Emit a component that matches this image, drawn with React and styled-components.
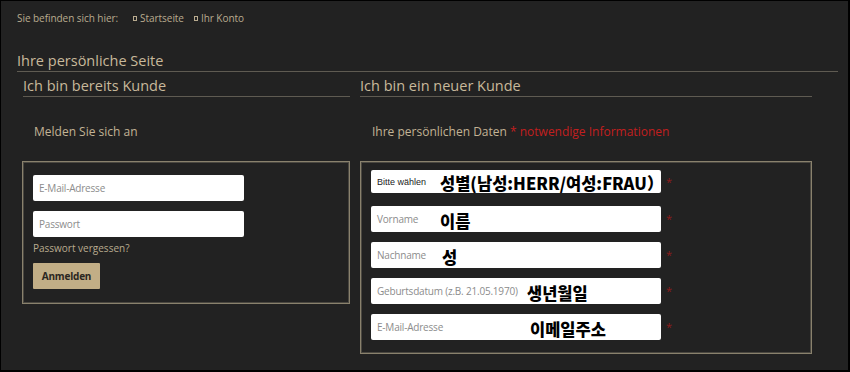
import React from "react";
import styled, { createGlobalStyle } from "styled-components";

const Global = createGlobalStyle`
  html, body { margin: 0; padding: 0; background: #222222; }
  * { box-sizing: border-box; }
`;

const Frame = styled.div`
  width: 850px;
  height: 372px;
  background: #222222;
  border-style: solid;
  border-color: #000;
  border-width: 1px 2px 2px 1px;
  font-family: "Open Sans", "Liberation Sans", sans-serif;
  color: #c2b395;
  overflow: hidden;
`;

const Breadcrumb = styled.div`
  display: flex;
  align-items: center;
  padding: 9px 0 0 16px;
  font-size: 10px;
  letter-spacing: -0.05px;
  line-height: 16px;
  color: #b9ab8f;
`;

const Crumb = styled.span`
  display: inline-flex;
  align-items: center;
  margin-left: ${(p) => p.$gap}px;
`;

const Bullet = styled.span`
  display: inline-block;
  width: 4px;
  height: 5px;
  border: 1px solid #b9ab8f;
  margin-right: 3px;
`;

const Main = styled.div`
  padding: 0 10px 0 16px;
`;

const PageTitle = styled.h1`
  margin: 25px 0 0 0;
  font-size: 14.5px;
  font-weight: 400;
  line-height: 20px;
  color: #c8b99b;
  border-bottom: 1px solid #5f5b52;
`;

const Columns = styled.div`
  display: grid;
  grid-template-columns: 328px 452px;
  column-gap: 10px;
  margin-left: 5px;
`;

const Column = styled.div`
  display: flex;
  flex-direction: column;
`;

const SectionTitle = styled.h2`
  margin: 4px 0 0 ${(p) => p.$indent}px;
  font-size: 14.5px;
  font-weight: 400;
  line-height: 20px;
  color: #c8b99b;
  border-bottom: 1px solid #5f5b52;
`;

const Intro = styled.div`
  margin: 26px 0 0 0;
  padding-left: 12px;
  font-size: 12px;
  line-height: 18px;
  color: #c2b395;
`;

const Required = styled.span`
  color: #c21f1f;
`;

const Panel = styled.div`
  margin-top: 20px;
  border: 1px solid #8a826d;
  box-shadow: inset 0 0 0 1px #4b4841;
  padding: ${(p) => p.$pad};
  display: flex;
  flex-direction: column;
`;

const Field = styled.div`
  position: relative;
  width: ${(p) => p.$w}px;
  height: ${(p) => p.$h || 26}px;
  background: #ffffff;
  border-radius: 2px;
  display: flex;
  align-items: center;
  padding-left: 6px;
  font-size: 10px;
  letter-spacing: -0.2px;
  color: #8c8c8c;
  margin-top: ${(p) => p.$mt || 0}px;
`;

const SelectText = styled.span`
  font-family: "Liberation Sans", Arial, sans-serif;
  font-size: 9px;
  letter-spacing: 0;
  color: #222;
`;

const Note = styled.span`
  position: absolute;
  left: ${(p) => p.$left}px;
  top: 0;
  bottom: 0;
  display: flex;
  align-items: center;
  padding-top: ${(p) => p.$pt || 3}px;
  font-family: "Noto Sans CJK KR", "Noto Sans", sans-serif;
  font-weight: 900;
  font-size: 16.5px;
  letter-spacing: 0;
  color: #000;
  white-space: nowrap;
`;

const Row = styled.div`
  display: flex;
  align-items: flex-start;
  margin-top: ${(p) => p.$mt || 0}px;
`;

const Star = styled.span`
  margin: ${(p) => p.$top}px 0 0 5px;
  font-size: 11px;
  line-height: 11px;
  color: #8e1b1b;
`;

const ForgotLink = styled.div`
  margin-top: 4px;
  font-size: 10px;
  line-height: 14px;
  color: #b9ab8f;
`;

const Button = styled.button`
  margin-top: 8px;
  width: 67px;
  height: 26px;
  border: none;
  border-radius: 1px;
  background: #c2ae86;
  color: #2a2621;
  font-family: "Open Sans", "Liberation Sans", sans-serif;
  font-weight: 700;
  font-size: 10px;
  letter-spacing: -0.2px;
  padding: 0;
`;

const fields = [
  { ph: "Vorname", note: "이름", left: 69 },
  { ph: "Nachname", note: "성", left: 71 },
  { ph: "Geburtsdatum (z.B. 21.05.1970)", note: "생년월일", left: 156 },
  { ph: "E-Mail-Adresse", note: "이메일주소", left: 159 },
];

export default function App() {
  return (
    <>
      <Global />
      <Frame>
        <Breadcrumb>
          <span>Sie befinden sich hier:</span>
          <Crumb $gap={15}>
            <Bullet />
            Startseite
          </Crumb>
          <Crumb $gap={10}>
            <Bullet />
            Ihr Konto
          </Crumb>
        </Breadcrumb>
        <Main>
          <PageTitle>Ihre persönliche Seite</PageTitle>
          <Columns>
            <Column>
              <SectionTitle $indent={1}>Ich bin bereits Kunde</SectionTitle>
              <Intro>Melden Sie sich an</Intro>
              <Panel $pad="13px 9px 14px 10px">
                <Field $w={211}>E-Mail-Adresse</Field>
                <Field $w={211} $mt={10}>Passwort</Field>
                <ForgotLink>Passwort vergessen?</ForgotLink>
                <Button>Anmelden</Button>
              </Panel>
            </Column>
            <Column>
              <SectionTitle $indent={0}>Ich bin ein neuer Kunde</SectionTitle>
              <Intro>
                Ihre persönlichen Daten <Required>* notwendige Informationen</Required>
              </Intro>
              <Panel $pad="8px 9px 13px 10px">
                <Row>
                  <Field $w={290} $h={23}>
                    <SelectText>Bitte wählen</SelectText>
                    <Note $left={69} $pt={2}>성별(남성:HERR/여성:FRAU）</Note>
                  </Field>
                  <Star $top={6}>*</Star>
                </Row>
                {fields.map((f, i) => (
                  <Row key={f.ph} $mt={i === 0 ? 13 : 10}>
                    <Field $w={290}>
                      {f.ph}
                      <Note $left={f.left}>{f.note}</Note>
                    </Field>
                    <Star $top={7}>*</Star>
                  </Row>
                ))}
              </Panel>
            </Column>
          </Columns>
        </Main>
      </Frame>
    </>
  );
}
